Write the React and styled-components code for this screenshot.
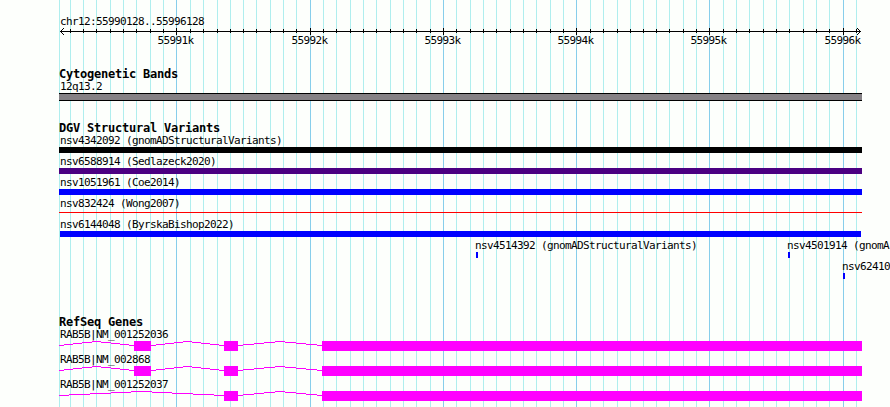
import React from "react";
import styled, { createGlobalStyle } from "styled-components";

const GlobalStyle = createGlobalStyle`
  body {
    margin: 0;
    background-color: #fdfffc;
  }
`;

const Browser = styled.main`
  display: grid;
  width: 890px;
  height: 407px;
  overflow: hidden;
  color: #000;
  font-family: "DejaVu Sans Mono", "Liberation Mono", monospace;
  font-size: 11px;
  line-height: 13px;
  letter-spacing: -0.62px;
  white-space: pre;
`;

const Grid = styled.svg`
  grid-area: 1 / 1;
  shape-rendering: crispEdges;
`;

const Tracks = styled.div`
  grid-area: 1 / 1;
  display: flex;
  flex-direction: column;
  min-width: 0;
  padding-top: 15px;
`;

const Label = styled.div`
  height: 13px;
  padding-left: 60px;
`;

const Ruler = styled.svg`
  display: block;
  width: 890px;
  height: 20px;
  flex-shrink: 0;
  margin-bottom: 20px;

  path {
    fill: none;
    stroke: #000;
    shape-rendering: crispEdges;
  }
`;

const Track = styled.section`
  display: flex;
  flex-direction: column;
  flex-shrink: 0;
  height: ${(props) => props.$height}px;
`;

const Heading = styled.h2`
  height: 12px;
  margin: 0;
  padding-left: 59px;
  font-size: 12px;
  line-height: 12px;
  font-weight: bold;
  letter-spacing: -0.22px;
`;

const Band = styled.div`
  box-sizing: border-box;
  width: 803px;
  height: 8px;
  margin-left: 59px;
  border: solid #000;
  border-width: 1px 0;
  background-color: #858185;
`;

const Row = styled.div`
  display: flex;
  height: 21px;
  flex-shrink: 0;
`;

const Feature = styled.div`
  flex: none;
  width: ${(props) => props.$width}px;
  margin-left: ${(props) => props.$gap}px;
`;

const FeatureName = styled.div`
  height: 13px;
  padding-left: ${(props) => props.$indent || 0}px;
`;

const Bar = styled.div`
  width: ${(props) => props.$width}px;
  height: ${(props) => (props.$thin ? 1 : 6)}px;
  margin-top: ${(props) => (props.$thin ? 2 : 0)}px;
  margin-left: ${(props) => props.$offset || 0}px;
  background-color: ${(props) => props.$color};
`;

const GeneRow = styled.div`
  height: 25px;
  flex-shrink: 0;
`;

const Transcript = styled.svg`
  display: block;
  width: 890px;
  height: 10px;
  fill: #f0f;
  shape-rendering: crispEdges;

  path {
    fill: none;
    stroke: #f0f;
  }
`;

const minorLines = [
  59, 70, 83, 96, 110, 123, 136, 150, 163, 190, 203, 217, 230, 243, 256, 270,
  283, 296, 323, 336, 350, 363, 376, 390, 403, 416, 430, 456, 470, 483, 496,
  510, 523, 536, 550, 563, 590, 603, 617, 630, 643, 656, 669, 683, 696, 723,
  736, 749, 763, 776, 789, 803, 816, 829, 856,
];

const majorLines = [
  { x: 176, name: "55991k" },
  { x: 310, name: "55992k" },
  { x: 443, name: "55993k" },
  { x: 576, name: "55994k" },
  { x: 709, name: "55995k" },
  { x: 843, name: "55996k" },
];

const variants = [
  { name: "nsv4342092 (gnomADStructuralVariants)", color: "#000" },
  { name: "nsv6588914 (Sedlazeck2020)", color: "#4b0082" },
  { name: "nsv1051961 (Coe2014)", color: "#00f" },
  { name: "nsv832424 (Wong2007)", color: "#f00", thin: true },
  {
    name: "nsv6144048 (ByrskaBishop2022)",
    color: "#00f",
    offset: 1,
    width: 801,
  },
];

const genes = [
  { name: "RAB5B|NM_001252036", exons: [[134, 151], [224, 238]] },
  { name: "RAB5B|NM_002868", exons: [[134, 151], [224, 238]] },
  { name: "RAB5B|NM_001252037", exons: [[224, 238]] },
];

// One pixel steps up to the middle of the intron and back down
const intron = (start, end) => {
  const step = (end - start) / 8;
  let d = "";
  let x = start;
  for (let i = 0; i < 9; i++) {
    const stop = i === 8 ? end : Math.round(start + step * (i + 0.5));
    d += `M${x} ${Math.abs(4 - i) + 0.5}H${stop}`;
    x = stop;
  }
  return d;
};

const Gene = ({ name, exons }) => {
  const blocks = [...exons, [322, 862]];
  return (
    <GeneRow>
      <Label>{name}</Label>
      <Transcript>
        {blocks.map(([start, end], i) => (
          <g key={start}>
            <path d={intron(i ? blocks[i - 1][1] : 59, start)} />
            <rect x={start} width={end - start} height="10" />
          </g>
        ))}
      </Transcript>
    </GeneRow>
  );
};

const App = () => (
  <>
    <GlobalStyle />
    <Browser>
      <Grid width="890" height="407">
        {minorLines.map((x) => (
          <rect key={x} x={x} width="1" height="407" fill="#afeeee" />
        ))}
        {majorLines.map(({ x }) => (
          <rect key={x} x={x} width="1" height="407" fill="#87ceeb" />
        ))}
      </Grid>
      <Tracks>
        <Label>chr12:55990128..55996128</Label>
        <Ruler>
          <path d="M60 3.5H861" />
          <path d="M61 2.5H62M62 1.5H63M63 0.5H64M61 4.5H62M62 5.5H63M63 6.5H64" />
          <path d="M859 2.5H860M858 1.5H859M857 0.5H858M859 4.5H860M858 5.5H859M857 6.5H858" />
          <path
            d={minorLines
              .slice(1)
              .map((x) => `M${x + 0.5} 1V5`)
              .join("")}
          />
          {majorLines.map(({ x, name }) => (
            <g key={x}>
              <path d={`M${x + 0.5} 0V7`} />
              <text x={x - 18.5} y="16">
                {name}
              </text>
            </g>
          ))}
        </Ruler>
        <Track $height={54}>
          <Heading>Cytogenetic Bands</Heading>
          <Label>12q13.2</Label>
          <Band />
        </Track>
        <Track $height={194}>
          <Heading>DGV Structural Variants</Heading>
          {variants.map(({ name, color, thin, offset, width = 803 }) => (
            <Row key={name}>
              <Feature $gap={59} $width={803}>
                <FeatureName $indent={1}>{name}</FeatureName>
                <Bar $width={width} $offset={offset} $thin={thin} $color={color} />
              </Feature>
            </Row>
          ))}
          <Row>
            <Feature $gap={475} $width={312}>
              <FeatureName>nsv4514392 (gnomADStructuralVariants)</FeatureName>
              <Bar $width={2} $offset={1} $color="#00f" />
            </Feature>
            <Feature $gap={0} $width={103}>
              <FeatureName>nsv4501914 (gnomA</FeatureName>
              <Bar $width={2} $offset={1} $color="#00f" />
            </Feature>
          </Row>
          <Row>
            <Feature $gap={842} $width={48}>
              <FeatureName>nsv62410</FeatureName>
              <Bar $width={2} $offset={1} $color="#00f" />
            </Feature>
          </Row>
        </Track>
        <Track $height={100}>
          <Heading>RefSeq Genes</Heading>
          {genes.map((gene) => (
            <Gene key={gene.name} {...gene} />
          ))}
        </Track>
      </Tracks>
    </Browser>
  </>
);

export default App;
